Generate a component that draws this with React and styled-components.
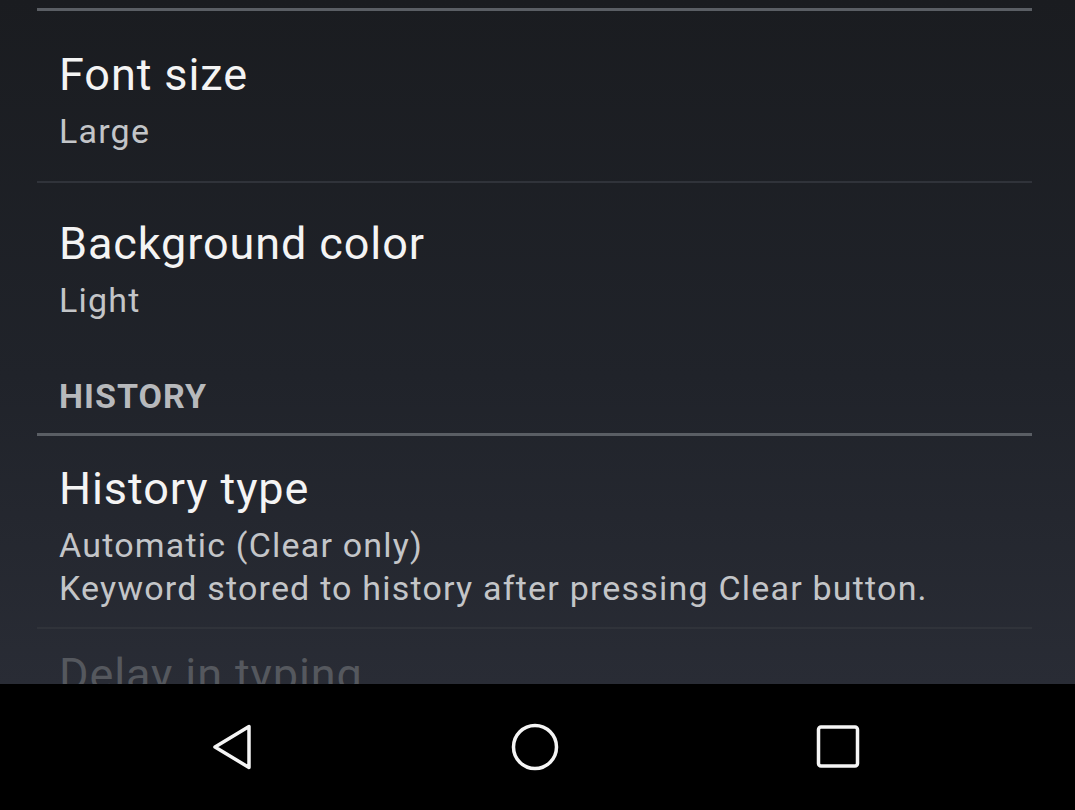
import React from 'react'
import styled, { createGlobalStyle } from 'styled-components'

const GlobalStyle = createGlobalStyle`
  html, body {
    margin: 0;
    padding: 0;
    background: #000;
  }
  body {
    font-family: Roboto, "Noto Sans", "Liberation Sans", sans-serif;
  }
`

const Screen = styled.div`
  width: 1075px;
  height: 810px;
  display: flex;
  flex-direction: column;
  overflow: hidden;
`

const List = styled.div`
  flex: 1;
  min-height: 0;
  overflow: hidden;
  padding: 8px 43px 0 37px;
  background: linear-gradient(180deg, #1a1c20 0%, #20232a 55%, #292c35 100%);
`

const Divider = styled.div`
  height: ${props => props.$thick ? '3px' : '2px'};
  background: ${props => props.$thick ? '#5a5e64' : '#30333a'};
`

const Pref = styled.div`
  padding: ${props => props.$top}px 0 ${props => props.$bottom}px 22px;
  display: flex;
  flex-direction: column;
`

const Title = styled.div`
  font-size: 45px;
  line-height: 54px;
  letter-spacing: 0.9px;
  color: ${props => props.$disabled ? '#55585e' : '#f4f4f4'};
  white-space: nowrap;
`

const Summary = styled.div`
  font-size: 34px;
  line-height: 43px;
  letter-spacing: 1.2px;
  color: #c3c5c8;
  white-space: nowrap;
  ${Title} + & {
    margin-top: 8px;
  }
`

const Category = styled.div`
  padding: 54px 0 17px 22px;
  font-size: 34px;
  line-height: 40px;
  font-weight: 700;
  color: #b7b9bc;
  letter-spacing: 1px;
`

const NavBar = styled.div`
  height: 126px;
  flex-shrink: 0;
  background: #000;
  display: flex;
  align-items: center;
  justify-content: center;
  gap: 203px;
  padding-right: 5px;
`

const NavButton = styled.div`
  width: 100px;
  height: 100px;
  display: flex;
  align-items: center;
  justify-content: center;
`

const BackIcon = () => (
  <svg width="60" height="60" viewBox="0 0 60 60">
    <path d="M13 30 L47 9.5 L47 50.5 Z" fill="none" stroke="#f5f5f5" strokeWidth="3.5" strokeLinejoin="round" />
  </svg>
)

const HomeIcon = () => (
  <svg width="60" height="60" viewBox="0 0 60 60">
    <circle cx="30" cy="30" r="21.5" fill="none" stroke="#f5f5f5" strokeWidth="3.5" />
  </svg>
)

const RecentsIcon = () => (
  <svg width="60" height="60" viewBox="0 0 60 60">
    <rect x="10.5" y="10" width="39" height="39" rx="2.5" fill="none" stroke="#f5f5f5" strokeWidth="3.5" />
  </svg>
)

const App = () => (
  <Screen>
    <GlobalStyle />
    <List>
      <Divider $thick />
      <Pref $top={37} $bottom={28}>
        <Title>Font size</Title>
        <Summary>Large</Summary>
      </Pref>
      <Divider />
      <Pref $top={34} $bottom={0}>
        <Title>Background color</Title>
        <Summary>Light</Summary>
      </Pref>
      <Category>HISTORY</Category>
      <Divider $thick />
      <Pref $top={26} $bottom={17}>
        <Title>History type</Title>
        <Summary>Automatic (Clear only)</Summary>
        <Summary>Keyword stored to history after pressing Clear button.</Summary>
      </Pref>
      <Divider />
      <Pref $top={19} $bottom={20}>
        <Title $disabled>Delay in typing</Title>
      </Pref>
    </List>
    <NavBar>
      <NavButton><BackIcon /></NavButton>
      <NavButton><HomeIcon /></NavButton>
      <NavButton><RecentsIcon /></NavButton>
    </NavBar>
  </Screen>
)

export default App
